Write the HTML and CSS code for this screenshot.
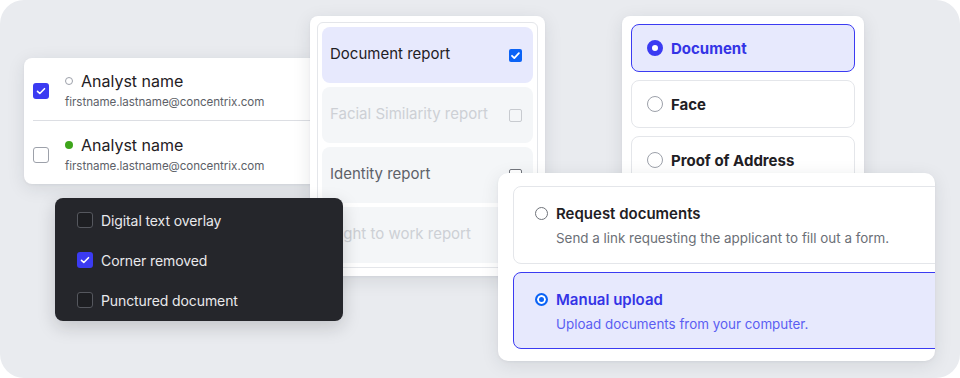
FILE: index.html
```html
<!DOCTYPE html>
<html lang="en">
<head>
<meta charset="utf-8">
<title>Cards</title>
<link rel="stylesheet" href="styles.css">
</head>
<body>
<div class="canvas">

  <div class="card analyst-card">
    <div class="analyst-row divider">
      <span class="cb cb-on"><svg viewBox="0 0 16 16"><path d="M4.5 8.3l2.3 2.2 4.7-4.8" /></svg></span>
      <div class="analyst-info">
        <div class="analyst-name"><span class="dot dot-hollow"></span>Analyst name</div>
        <div class="analyst-email">firstname.lastname@concentrix.com</div>
      </div>
    </div>
    <div class="analyst-row">
      <span class="cb cb-off"></span>
      <div class="analyst-info">
        <div class="analyst-name"><span class="dot dot-green"></span>Analyst name</div>
        <div class="analyst-email">firstname.lastname@concentrix.com</div>
      </div>
    </div>
  </div>

  <div class="card report-card">
    <div class="report-list">
      <div class="report-item report-active">
        <span class="report-label">Document report</span>
        <span class="ncb ncb-on"><svg viewBox="0 0 13 13"><path d="M3 6.8l2.3 2.3 4.6-5" /></svg></span>
      </div>
      <div class="report-item report-disabled">
        <span class="report-label">Facial Similarity report</span>
        <span class="ncb ncb-dis"></span>
      </div>
      <div class="report-item">
        <span class="report-label">Identity report</span>
        <span class="ncb ncb-off"></span>
      </div>
      <div class="report-item report-disabled">
        <span class="report-label">Right to work report</span>
        <span class="ncb ncb-dis"></span>
      </div>
    </div>
  </div>

  <div class="card dark-menu">
    <div class="menu-item"><span class="cb cb-dark"></span>Digital text overlay</div>
    <div class="menu-item"><span class="cb cb-on"><svg viewBox="0 0 16 16"><path d="M4.5 8.3l2.3 2.2 4.7-4.8" /></svg></span>Corner removed</div>
    <div class="menu-item"><span class="cb cb-dark"></span>Punctured document</div>
  </div>

  <div class="card type-card">
    <div class="type-item type-active"><span class="radio radio-on"></span>Document</div>
    <div class="type-item"><span class="radio"></span>Face</div>
    <div class="type-item"><span class="radio"></span>Proof of Address</div>
  </div>

  <div class="card method-card">
    <div class="method-item">
      <span class="nradio"></span>
      <div class="method-text">
        <div class="method-title">Request documents</div>
        <div class="method-desc">Send a link requesting the applicant to fill out a form.</div>
      </div>
    </div>
    <div class="method-item method-active">
      <span class="nradio nradio-on"></span>
      <div class="method-text">
        <div class="method-title">Manual upload</div>
        <div class="method-desc">Upload documents from your computer.</div>
      </div>
    </div>
  </div>

</div>
</body>
</html>
```

FILE: styles.css
```css
* { box-sizing: border-box; }
html, body { margin: 0; padding: 0; background: #ffffff; }
body { font-family: Inter, "Noto Sans", sans-serif; color: #1f2024; }

.canvas {
  position: relative;
  width: 960px;
  height: 378px;
  background: #e9ebef;
  border-radius: 24px;
  overflow: hidden;
}

.card {
  position: absolute;
  background: #ffffff;
  border-radius: 8px;
  box-shadow: 0 4px 18px rgba(30, 35, 50, 0.10), 0 1px 3px rgba(30, 35, 50, 0.05);
}

/* checkboxes */
.cb {
  flex: none;
  width: 16px;
  height: 16px;
  border-radius: 3px;
  display: inline-flex;
  align-items: center;
  justify-content: center;
}
.cb svg { width: 16px; height: 16px; fill: none; stroke: #ffffff; stroke-width: 1.6; stroke-linecap: round; stroke-linejoin: round; }
.cb-on { background: #3b3bf2; }
.cb-off { border: 1px solid #9da1aa; background: #ffffff; }
.cb-dark { border: 1px solid #55575e; background: #1d1e22; }

/* analyst card */
.analyst-card {
  left: 24px;
  top: 58px;
  width: 300px;
  height: 126px;
  display: flex;
  flex-direction: column;
}
.analyst-row {
  flex: 1;
  display: flex;
  align-items: center;
  gap: 16px;
  margin-left: 9px;
  padding-top: 4px;
}
.analyst-row.divider { border-bottom: 1px solid #dcdee3; padding-top: 3px; }
.analyst-info { display: flex; flex-direction: column; gap: 3px; }
.analyst-name {
  display: flex;
  align-items: center;
  gap: 8px;
  font-size: 16px;
  line-height: 20px;
  font-weight: 400;
  color: #1f2024;
}
.dot { width: 8px; height: 8px; border-radius: 50%; flex: none; }
.dot-hollow { border: 1.3px solid #9da1aa; }
.dot-green { background: #3ea51b; }
.analyst-email { font-size: 11.6px; line-height: 16px; color: #5d6168; letter-spacing: -0.05px; }

/* report card */
.report-card {
  left: 310px;
  top: 16px;
  width: 235px;
  height: 260px;
  padding: 6px 7px 7px;
}
.report-list {
  border: 1px solid #e4e6ea;
  border-radius: 6px;
  padding: 4px;
  display: flex;
  flex-direction: column;
  gap: 4px;
}
.report-item {
  height: 56px;
  border-radius: 8px;
  background: #f4f6f8;
  display: flex;
  align-items: center;
  justify-content: space-between;
  padding: 0 11px 0 8px;
  font-size: 15px;
  color: #5d6168;
}
.report-label { margin-top: -3px; }
.report-active { background: #e7e9fd; color: #1f2024; }
.report-disabled { color: #cdd0d5; }
.ncb { width: 13px; height: 13px; border-radius: 2px; flex: none; display: inline-flex; }
.ncb svg { width: 13px; height: 13px; fill: none; stroke: #ffffff; stroke-width: 1.8; stroke-linecap: round; stroke-linejoin: round; }
.ncb-on { background: #0b63f6; }
.ncb-off { border: 1px solid #73767d; background: #ffffff; }
.ncb-dis { border: 1px solid #c8cbd0; background: #f4f6f8; }

/* dark menu */
.dark-menu {
  left: 55px;
  top: 198px;
  width: 288px;
  height: 123px;
  background: #25262b;
  padding: 2px 22px 1px;
  display: flex;
  flex-direction: column;
  box-shadow: 0 6px 18px rgba(20, 22, 30, 0.18);
}
.menu-item {
  height: 40px;
  display: flex;
  align-items: center;
  gap: 8px;
  font-size: 14px;
  color: #e9e9ec;
  letter-spacing: -0.1px;
}

/* type card */
.type-card {
  left: 622px;
  top: 16px;
  width: 242px;
  height: 200px;
  padding: 8px 9px;
  display: flex;
  flex-direction: column;
  gap: 8px;
}
.type-item {
  height: 48px;
  border: 1px solid #e4e6ea;
  border-radius: 8px;
  display: flex;
  align-items: center;
  gap: 8px;
  padding-left: 15px;
  font-size: 15px;
  font-weight: 700;
  color: #1f2024;
}
.type-active { background: #e7e9fd; border-color: #3b3bf2; color: #3434e6; }
.radio {
  width: 16px;
  height: 16px;
  border-radius: 50%;
  border: 1.3px solid #9da1aa;
  flex: none;
  background: #ffffff;
}
.radio-on { border: 5px solid #3b3bf2; }

/* method card */
.method-card {
  left: 498px;
  top: 173px;
  width: 437px;
  height: 188px;
  border-radius: 10px;
  overflow: hidden;
  padding: 13px 0 0 15px;
  display: flex;
  flex-direction: column;
  gap: 8px;
}
.method-item {
  width: 480px;
  flex: none;
  height: 78px;
  border: 1px solid #e4e6ea;
  border-radius: 8px;
  display: flex;
  align-items: flex-start;
  gap: 8px;
  padding: 20px 0 0 21px;
}
.method-active { height: 77px; background: #e7e9fd; border-color: #3b3bf2; }
.nradio {
  width: 13px;
  height: 13px;
  border-radius: 50%;
  border: 1px solid #6f737a;
  background: #ffffff;
  flex: none;
}
.nradio-on { border: 2px solid #0b63f6; box-shadow: inset 0 0 0 2px #ffffff; background: #0b63f6; }
.method-text { display: flex; flex-direction: column; gap: 5px; margin-top: -3px; }
.method-title { font-size: 15px; line-height: 20px; font-weight: 600; color: #1f2024; }
.method-desc { font-size: 13.4px; line-height: 18px; color: #6b6f76; }
.method-active .method-title { color: #3434e6; }
.method-active .method-desc { color: #5b5ef2; }
```
